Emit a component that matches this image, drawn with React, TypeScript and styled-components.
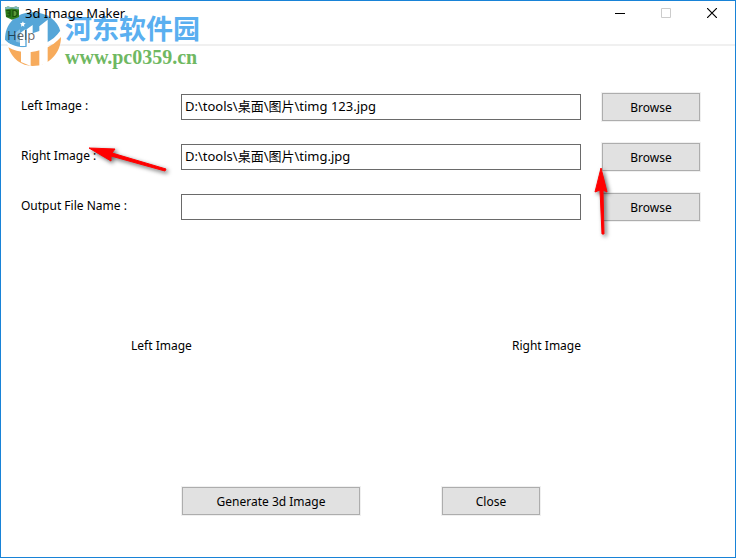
import React, { useState } from "react";
import styled, { createGlobalStyle } from "styled-components";

const GlobalStyle = createGlobalStyle`
  *, *::before, *::after { box-sizing: border-box; }
  body { margin: 0; background: #fff; }
`;

const Window = styled.div`
  position: relative;
  display: flex;
  flex-direction: column;
  min-height: 100vh;
  border: 1px solid #1883d7;
  background: #fff;
  color: #000;
  font: 12px/18px "Noto Sans", "Noto Sans CJK SC", sans-serif;
`;

const TitleBar = styled.header`
  position: relative;
  z-index: 1;
  display: flex;
  align-items: center;
  height: 24px;
  padding-left: 4px;
`;

const Title = styled.h1`
  flex: 1;
  margin: 0 0 0 6px;
  font-size: 13px;
  font-weight: 400;
`;

const CaptionButton = styled.button`
  display: flex;
  align-items: center;
  justify-content: center;
  width: 46px;
  height: 24px;
  padding: 0;
  border: 0;
  background: none;
  color: #000;

  &:disabled { color: #ccc; }
`;

const MenuBar = styled.nav`
  display: flex;
  align-items: center;
  height: 21px;
  padding-left: 6px;
  border-bottom: 2px solid #f0f0f0;
`;

const MenuItem = styled.button`
  position: relative;
  z-index: 1;
  padding: 0;
  border: 0;
  background: none;
  color: rgba(0, 0, 0, 0.6);
  font: inherit;
  font-size: 13px;
`;

const Form = styled.form`
  display: flex;
  flex-direction: column;
  padding: 46px 34px 41px 20px;
`;

const Fields = styled.div`
  display: flex;
  flex-direction: column;
  gap: 20px;
`;

const FieldRow = styled.div`
  display: grid;
  grid-template-columns: 160px minmax(0, 1fr) 120px;
  align-items: center;
`;

const Label = styled.label`
  padding-bottom: 2px;
`;

const TextBox = styled.input`
  width: 100%;
  height: 26px;
  padding: 0 3px 3px;
  border: 1px solid #6a6a6a;
  border-radius: 0;
  outline: none;
  background: #fff;
  color: #000;
  font: 13px/18px "Noto Sans", "Noto Sans CJK SC", sans-serif;
`;

const PushButton = styled.button<{ $wide?: boolean }>`
  width: ${(p) => (p.$wide ? 180 : 100)}px;
  height: 30px;
  justify-self: end;
  padding: 2px 0 0;
  border: 1px solid #f0f0f0;
  background: #e1e1e1;
  box-shadow: inset 0 0 0 1px #adadad;
  color: #000;
  font: inherit;
`;

const Previews = styled.div`
  display: flex;
  justify-content: space-between;
  margin-top: 115px;
  padding: 0 120px 0 110px;
`;

const Actions = styled.div`
  display: flex;
  gap: 80px;
  margin-top: 131px;
  padding-left: 160px;
`;

const Watermark = styled.div`
  position: absolute;
  top: 8px;
  left: 3px;
  display: flex;
  gap: 1px;
  pointer-events: none;
`;

const WatermarkText = styled.div`
  display: flex;
  flex-direction: column;
`;

const SiteName = styled.span`
  color: #5aaff0;
  font: 700 27px/38px "Noto Sans CJK SC", sans-serif;
`;

const SiteUrl = styled.span`
  color: #6fb862;
  font: 700 20px/20px "Liberation Serif", serif;
`;

const Arrow = styled.svg<{ $left: number; $top: number }>`
  position: absolute;
  left: ${(p) => p.$left}px;
  top: ${(p) => p.$top}px;
  overflow: visible;
  pointer-events: none;
  filter: drop-shadow(2px 2px 2px rgba(0, 0, 0, 0.6));
`;

const AppIcon = () => (
  <svg width="14" height="14" viewBox="0 0 14 14" aria-hidden="true">
    <path d="M0 1.5 3 .5 7 1.5 11 .5 14 1.5V11L7 13.8 1 11Z" fill="#2f7d1c" />
    <path d="M0 1.5 3 .5 7 1.5 11 .5 14 1.5V3.5L7 2.5 0 3.5Z" fill="#7db8bd" />
    <path d="M1.5 4.5H5V10H1.5M2.5 7.2H5" fill="none" stroke="#1a4f0d" strokeWidth="1.2" />
    <path d="M8 4.5H10.5L12 6V9L10.5 10.5H8Z" fill="#5c9a3a" stroke="#1a4f0d" strokeWidth="1.2" />
  </svg>
);

const Logo = () => (
  <svg width="60" height="60" viewBox="12 27 180 180" aria-hidden="true">
    <path
      d="M15 119C14 72 49 37 97 37c43 0 76 24 84 57-7 25-32 43-62 50-39 9-79 3-104-25Z"
      fill="#56a6d8"
    />
    <path d="M25 142c39 26 117 18 158-31 0 47-35 87-85 87-34 0-62-21-73-56Z" fill="#f7ab5c" />
    <path d="M16 124c42 30 128 25 166-33 2 8 2 12 0 18-37 43-120 57-157 29Z" fill="#fff" />
    <path d="M60 100 76 88v50H60Z" fill="#fff" />
    <path d="M80 88 98 75v25l20-7V79l25-20v130l-25 8v-51l-26 5v47l-29-12v-43l17-3Z" fill="#fff" />
    <path d="M42 101 60 88v40l-12-3v-19Z" fill="#fff" fillOpacity=".3" />
    <path d="m69 64 2 5 6 1-5 4 1 6-5-3-5 3 1-6-4-4 6-1Z" fill="#fff" />
  </svg>
);

type Field = { id: string; label: string; value: string };

const initialFields: Field[] = [
  { id: "left", label: "Left Image :", value: "D:\\tools\\桌面\\图片\\timg 123.jpg" },
  { id: "right", label: "Right Image :", value: "D:\\tools\\桌面\\图片\\timg.jpg" },
  { id: "output", label: "Output File Name :", value: "" },
];

export default function App() {
  const [fields, setFields] = useState(initialFields);
  const update = (id: string, value: string) =>
    setFields((all) => all.map((f) => (f.id === id ? { ...f, value } : f)));

  return (
    <>
      <GlobalStyle />
      <Window>
        <TitleBar>
          <AppIcon />
          <Title>3d Image Maker</Title>
          <CaptionButton aria-label="Minimize">
            <svg width="10" height="10"><path d="M0 5.5h10" stroke="currentColor" /></svg>
          </CaptionButton>
          <CaptionButton aria-label="Maximize" disabled>
            <svg width="10" height="10"><path d="M.5.5h9v9h-9Z" fill="none" stroke="currentColor" /></svg>
          </CaptionButton>
          <CaptionButton aria-label="Close window">
            <svg width="10" height="10"><path d="m0 0 10 10m0-10L0 10" stroke="currentColor" strokeWidth="1.2" /></svg>
          </CaptionButton>
        </TitleBar>
        <MenuBar>
          <MenuItem>Help</MenuItem>
        </MenuBar>
        <Form onSubmit={(e) => e.preventDefault()}>
          <Fields>
            {fields.map((f) => (
              <FieldRow key={f.id}>
                <Label htmlFor={f.id}>{f.label}</Label>
                <TextBox id={f.id} value={f.value} onChange={(e) => update(f.id, e.target.value)} />
                <PushButton type="button">Browse</PushButton>
              </FieldRow>
            ))}
          </Fields>
          <Previews>
            <span>Left Image</span>
            <span>Right Image</span>
          </Previews>
          <Actions>
            <PushButton type="submit" $wide>Generate 3d Image</PushButton>
            <PushButton type="button">Close</PushButton>
          </Actions>
        </Form>
        <Watermark>
          <Logo />
          <WatermarkText>
            <SiteName>河东软件园</SiteName>
            <SiteUrl>www.pc0359.cn</SiteUrl>
          </WatermarkText>
        </Watermark>
        <Arrow $left={87} $top={146} width="80" height="26" aria-hidden="true">
          <path d="M1 1 27 2 24 6 78 22 77 24 23 9 23 14Z" fill="#f00" stroke="#f00" strokeLinejoin="round" />
        </Arrow>
        <Arrow $left={594} $top={165} width="14" height="70" aria-hidden="true">
          <path d="M6 2 12 26 8 24 9 68 7 68 5 24 0 26Z" fill="#f00" stroke="#f00" strokeLinejoin="round" />
        </Arrow>
      </Window>
    </>
  );
}
